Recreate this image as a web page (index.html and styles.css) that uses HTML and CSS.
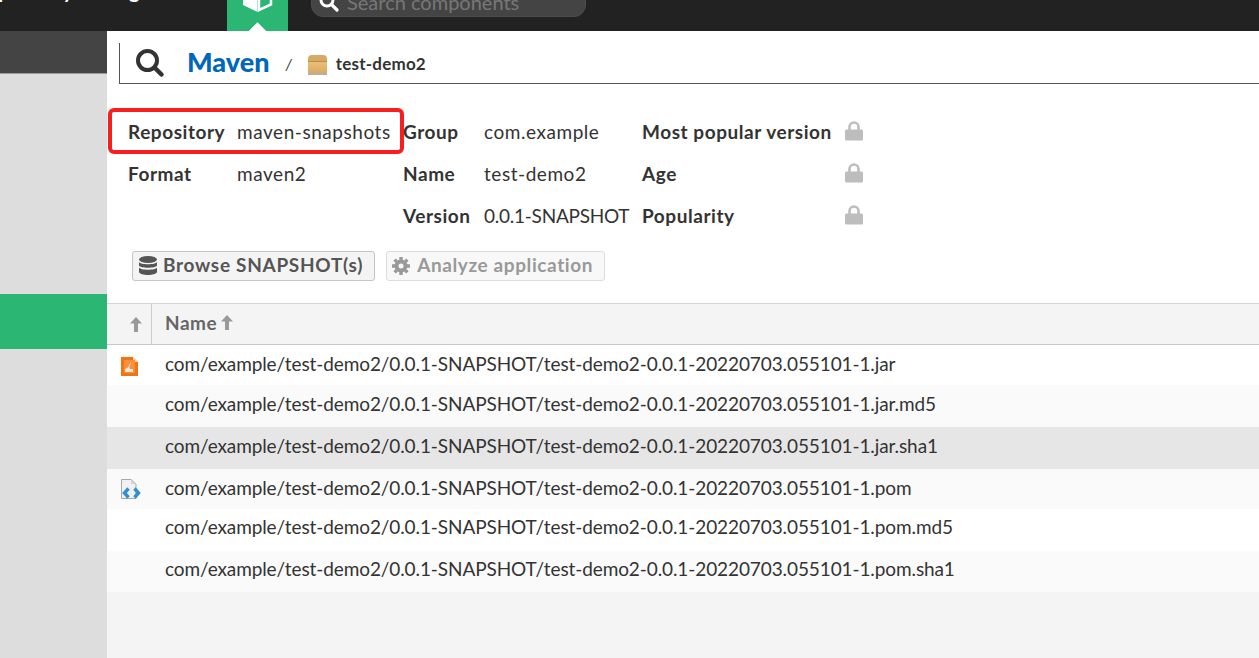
FILE: index.html
```html
<!DOCTYPE html>
<html lang="en">
<head>
  <meta charset="UTF-8" />
  <title>Maven test-demo2</title>
  <link rel="stylesheet" href="styles.css">
</head>
<body>
  <header class="topbar">
    <div class="brand">Repository Manager</div>
    <div class="logo-tab">
      <svg class="logo-hex" width="32" height="14" viewBox="0 0 32 14">
        <path d="M1 -6V6L15.500 13V-2Z" fill="#fff"/>
        <path d="M17 -2V11L29 5.500V-6Z" fill="#2bb673" stroke="#fff" stroke-width="2.500"/>
      </svg>
      <span class="logo-notch"></span>
    </div>
    <div class="search">
      <svg width="20" height="20" viewBox="0 0 20 20"><circle cx="8" cy="8" r="6" fill="none" stroke="#fff" stroke-width="3"/><path d="M12.500 12.500L18 18" stroke="#fff" stroke-width="3.200" stroke-linecap="round"/></svg>
      <span>Search components</span>
    </div>
  </header>

  <div class="layout">
    <aside class="sidebar">
      <div class="side-title"></div>
      <div class="side-active"></div>
    </aside>

    <main class="content">
      <div class="crumbs">
        <svg class="crumb-search" width="30" height="30" viewBox="0 0 30 30"><circle cx="12.500" cy="12.500" r="9.500" fill="none" stroke="#333" stroke-width="4"/><path d="M19.500 19.500L26.500 26.500" stroke="#333" stroke-width="4.500" stroke-linecap="round"/></svg>
        <a class="crumb-root">Maven</a>
        <span class="crumb-sep">/</span>
        <svg class="crumb-box" width="21" height="21" viewBox="0 0 21 21">
          <defs>
            <linearGradient id="boxBody" x1="0" y1="0" x2="0" y2="1"><stop offset="0" stop-color="#e9c27f"/><stop offset="1" stop-color="#dba95f"/></linearGradient>
          </defs>
          <path d="M1 7V5Q1 1 5 1H16Q20 1 20 5V7Z" fill="#d8a963"/>
          <rect x="1" y="7" width="19" height="12" fill="url(#boxBody)"/>
          <rect x="1" y="7" width="19" height="1" fill="#b98c4f"/>
          <rect x="1" y="19" width="19" height="2" fill="#b5b0a6"/>
        </svg>
        <span class="crumb-name">test-demo2</span>
      </div>

      <section class="summary">
        <div class="info-grid">
          <div class="info-key">Repository</div><div class="info-val">maven-snapshots</div>
          <div class="info-key">Group</div><div class="info-val">com.example</div>
          <div class="info-key">Most popular version</div>
          <svg class="lock" viewBox="0 0 18 20"><path d="M4.500 9V6a4.500 4.500 0 0 1 9 0V9" fill="none" stroke="#bdbdbd" stroke-width="2.600"/><rect y="8.500" width="18" height="11" rx="1.500" fill="#bdbdbd"/></svg>

          <div class="info-key">Format</div><div class="info-val">maven2</div>
          <div class="info-key">Name</div><div class="info-val">test-demo2</div>
          <div class="info-key">Age</div>
          <svg class="lock" viewBox="0 0 18 20"><path d="M4.500 9V6a4.500 4.500 0 0 1 9 0V9" fill="none" stroke="#bdbdbd" stroke-width="2.600"/><rect y="8.500" width="18" height="11" rx="1.500" fill="#bdbdbd"/></svg>

          <div></div><div></div>
          <div class="info-key">Version</div><div class="info-val info-num">0.0.1-SNAPSHOT</div>
          <div class="info-key">Popularity</div>
          <svg class="lock" viewBox="0 0 18 20"><path d="M4.500 9V6a4.500 4.500 0 0 1 9 0V9" fill="none" stroke="#bdbdbd" stroke-width="2.600"/><rect y="8.500" width="18" height="11" rx="1.500" fill="#bdbdbd"/></svg>
        </div>
        <div class="highlight"></div>

        <div class="actions">
          <button class="btn btn-browse">
            <svg width="18" height="20" viewBox="0 0 18 20" fill="#555"><ellipse cx="9" cy="3.500" rx="9" ry="3.500"/><path d="M0 6C1 9 17 9 18 6V9.500C17 12.500 1 12.500 0 9.500Z"/><path d="M0 11.500C1 14.500 17 14.500 18 11.500V16C17 20 1 20 0 16Z"/></svg>
            Browse SNAPSHOT(s)
          </button>
          <button class="btn btn-disabled">
            <svg width="20" height="20" viewBox="0 0 20 20"><path d="M10 3.500a6.500 6.500 0 1 0 0 13a6.500 6.500 0 1 0 0-13Zm0 4a2.500 2.500 0 1 1 0 5a2.500 2.500 0 1 1 0-5Z" fill="#999" fill-rule="evenodd"/><path d="M10 1V4M10 16V19M1 10H4M16 10H19M3.600 3.600L5.700 5.700M14.300 14.300L16.400 16.400M16.400 3.600L14.300 5.700M5.700 14.300L3.600 16.400" stroke="#999" stroke-width="3.400"/></svg>
            Analyze application
          </button>
        </div>
      </section>

      <div class="assets">
        <div class="assets-head">
          <div class="col-icon"><svg width="12" height="15" viewBox="0 0 12 15"><path d="M6 0L12 6.500H8V15H4V6.500H0Z" fill="#999"/></svg></div>
          <div class="col-name">Name <svg width="12" height="15" viewBox="0 0 12 15"><path d="M6 0L12 6.500H8V15H4V6.500H0Z" fill="#999"/></svg></div>
        </div>

        <div class="row row-short">
          <div class="col-icon">
            <svg width="17" height="19" viewBox="0 0 17 19">
              <path d="M0 0H12L17 5V19H0Z" fill="#f07412"/>
              <path d="M12 0L17 5H12Z" fill="#fbd3ad"/>
              <rect x="3" y="3" width="11" height="13" fill="#f78f3d"/>
              <path d="M9 5C11 8 7 9 9 12H12V15H4V12C6 12 9 9 9 5Z" fill="#fde6d2"/>
            </svg>
          </div>
          <div class="file">com/example/test-demo2/0.0.1-SNAPSHOT/test-demo2-0.0.1-20220703.055101-1.jar</div>
        </div>
        <div class="row row-alt">
          <div class="col-icon"></div>
          <div class="file">com/example/test-demo2/0.0.1-SNAPSHOT/test-demo2-0.0.1-20220703.055101-1.jar.md5</div>
        </div>
        <div class="row row-hover">
          <div class="col-icon"></div>
          <div class="file">com/example/test-demo2/0.0.1-SNAPSHOT/test-demo2-0.0.1-20220703.055101-1.jar.sha1</div>
        </div>
        <div class="row row-alt row-short">
          <div class="col-icon">
            <svg class="icon-pom" width="21" height="20" viewBox="0 0 21 20">
              <path d="M0.500 0.500H10L15 5V19.500H0.500Z" fill="#f1f1f1" stroke="#a8a8a8"/>
              <path d="M10 0.500V5H15Z" fill="#d4d4d4"/>
              <path d="M7.500 9.500L3.500 14L7.500 18.500M13.500 9.500L17.500 14L13.500 18.500" fill="none" stroke="#2f8fd0" stroke-width="3.400"/>
            </svg>
          </div>
          <div class="file">com/example/test-demo2/0.0.1-SNAPSHOT/test-demo2-0.0.1-20220703.055101-1.pom</div>
        </div>
        <div class="row row-up">
          <div class="col-icon"></div>
          <div class="file">com/example/test-demo2/0.0.1-SNAPSHOT/test-demo2-0.0.1-20220703.055101-1.pom.md5</div>
        </div>
        <div class="row row-alt row-last">
          <div class="col-icon"></div>
          <div class="file">com/example/test-demo2/0.0.1-SNAPSHOT/test-demo2-0.0.1-20220703.055101-1.pom.sha1</div>
        </div>
      </div>
    </main>
  </div>
</body>
</html>
```

FILE: styles.css
```css
* {
  margin: 0;
  padding: 0;
  box-sizing: border-box;
}

html, body {
  height: 100%;
  overflow: hidden;
}

body {
  font-family: Lato, "Open Sans", sans-serif;
  color: #333;
  background-color: #f4f4f4;
}

/* barra de cima, cortada no topo */
.topbar {
  display: flex;
  height: 31px;
  background-color: #222;
  overflow: hidden;
}

.brand {
  width: 227px;
  margin-top: -24px;
  margin-left: -25px;
  margin-right: 25px;
  font-size: 20px;
  line-height: 28px;
  font-weight: 700;
  letter-spacing: 0.2px;
  color: #fff;
  white-space: nowrap;
}

.logo-tab {
  position: relative;
  width: 61px;
  background-color: #2bb673;
}

.logo-hex {
  display: block;
  margin: -1px 0 0 15px;
}

.logo-notch {
  position: absolute;
  left: 24px;
  bottom: -7px;
  width: 13px;
  height: 13px;
  background-color: #fff;
  transform: rotate(45deg);
}

.search {
  display: flex;
  align-items: center;
  gap: 8px;
  width: 275px;
  height: 30px;
  margin: -13px 0 0 23px;
  padding-left: 7px;
  background-color: #444;
  border: 1px solid #4c4c4c;
  border-radius: 12px;
  color: #777;
  font-size: 20px;
}

.layout {
  display: flex;
  height: 627px;
}

.sidebar {
  width: 107px;
  flex-shrink: 0;
  background-color: #ddd;
}

.side-title {
  height: 43px;
  background-color: #444;
  border-bottom: 1px solid #999;
}

.side-active {
  height: 55px;
  margin-top: 220px;
  background-color: #2bb673;
}

.content {
  flex: 1;
  min-width: 0;
  background-color: #f4f4f4;
}

.crumbs {
  display: flex;
  align-items: center;
  height: 53px;
  padding: 12px 0 0 28px;
  background-color: #fff;
  position: relative;
}

.crumbs::before {
  content: "";
  position: absolute;
  left: 12px;
  right: 0;
  top: 12px;
  bottom: 0;
  border-left: 1px solid #555;
  border-bottom: 1px solid #555;
}

.crumb-search {
  flex-shrink: 0;
  margin-bottom: 2px;
}

.crumb-root {
  margin-left: 22px;
  margin-bottom: 4px;
  font-size: 27px;
  font-weight: 900;
  color: #0067b9;
}

.crumb-sep {
  margin-left: 16px;
  font-size: 15px;
  font-style: italic;
}

.crumb-box {
  margin-left: 15px;
  margin-top: 1px;
}

.crumb-name {
  margin-left: 8px;
  font-size: 17px;
  font-weight: 700;
  letter-spacing: 0.2px;
}

.summary {
  position: relative;
  height: 219px;
  padding: 26px 0 0 21px;
  background-color: #fff;
}

.info-grid {
  display: grid;
  grid-template-columns: 109px 166px 81px 158px 203px 18px;
  grid-auto-rows: 42px;
  align-items: center;
  font-size: 19px;
}

.info-key {
  font-weight: 700;
  letter-spacing: 0.55px;
  white-space: nowrap;
}

.info-val {
  letter-spacing: 0.55px;
  white-space: nowrap;
}

.info-num {
  letter-spacing: -0.25px;
}

.lock {
  width: 18px;
  height: 20px;
}

/* marcacao vermelha em volta do repositorio */
.highlight {
  position: absolute;
  left: 1px;
  top: 24px;
  width: 296px;
  height: 46px;
  border: 4px solid #f81e1e;
  border-radius: 6px;
}

.actions {
  display: flex;
  gap: 11px;
  margin: 15px 0 0 4px;
}

.btn {
  display: flex;
  align-items: center;
  gap: 6px;
  height: 30px;
  padding: 0 11px 3px 6px;
  font-family: inherit;
  font-size: 19px;
  font-weight: 700;
  letter-spacing: 0.6px;
  border-radius: 3px;
}

.btn svg {
  margin-top: 3px;
}

.btn-browse {
  padding-right: 11px;
  letter-spacing: 0.7px;
  color: #555;
  background-color: #f4f4f4;
  border: 1px solid #c4c4c4;
}

.btn-disabled {
  padding-left: 4px;
  color: #999;
  background-color: #f8f8f8;
  border: 1px solid #ddd;
}

.assets {
  font-size: 19px;
}

.assets-head {
  display: flex;
  height: 42px;
  background-color: #f4f4f4;
  border-top: 1px solid #d4d4d4;
  border-bottom: 1px solid #c8c8c8;
  font-weight: 700;
  letter-spacing: 0.5px;
  color: #666;
}

.assets-head .col-icon {
  border-right: 1px solid #ccc;
  padding-left: 23px;
}

.col-icon {
  display: flex;
  align-items: center;
  width: 45px;
  padding-left: 14px;
  flex-shrink: 0;
}

.col-name {
  display: flex;
  align-items: center;
  gap: 4px;
  padding-left: 13px;
  padding-bottom: 4px;
}

.row {
  display: flex;
  align-items: center;
  height: 42px;
  padding-bottom: 5px;
  background-color: #fff;
  letter-spacing: -0.1px;
}

.row .col-icon svg {
  margin-top: 6px;
}

.row-short {
  height: 40px;
  padding-bottom: 3px;
}

.row .col-icon .icon-pom {
  margin-top: 3px;
}

.row-up {
  padding-bottom: 7px;
}

.row-last {
  height: 41px;
  padding-bottom: 6px;
}

.row-alt {
  background-color: #fafafa;
}

.row-hover {
  background-color: #e6e6e6;
}

.file {
  padding-left: 13px;
  white-space: nowrap;
}
```
